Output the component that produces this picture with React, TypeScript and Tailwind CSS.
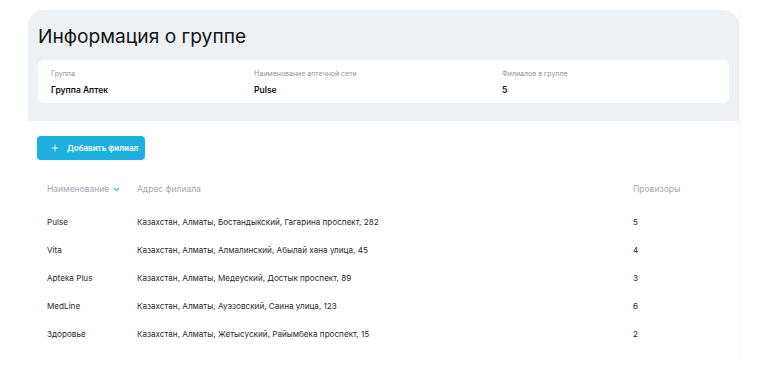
import { FC } from "react"
import { ChevronDown, Plus } from "lucide-react"

const branches = [
	{ name: "Pulse", address: "Казахстан, Алматы, Бостандыкский, Гагарина проспект, 282", count: 5 },
	{ name: "Vita", address: "Казахстан, Алматы, Алмалинский, Абылай хана улица, 45", count: 4 },
	{ name: "Apteka Plus", address: "Казахстан, Алматы, Медеуский, Достык проспект, 89", count: 3 },
	{ name: "MedLine", address: "Казахстан, Алматы, Ауэзовский, Саина улица, 123", count: 6 },
	{ name: "Здоровье", address: "Казахстан, Алматы, Жетысуский, Райымбека проспект, 15", count: 2 },
]

const App: FC = () => {
	return (
		<div className="min-h-[386px] bg-white pt-[10px] pl-[28px] font-['Inter',sans-serif]">
			<div className="w-[712px] bg-white border-r border-[#f6f7f8]">
				{/* group info */}
				<div className="bg-[#eef1f4] rounded-t-[16px] px-[10px] pt-[13px] pb-[18px]">
					<h1 className="text-[19.2px] leading-[26px] text-[#141414]">
						Информация о группе
					</h1>
					<div className="mt-[11px] bg-white rounded-[6px] h-[43px] pl-[13px] flex items-start pt-[9px]">
						<div className="w-[203px]">
							<p className="text-[7px] leading-[10px] text-[#8c919b]">Группа</p>
							<p className="mt-[5px] text-[8.5px] leading-[12px] font-semibold text-[#111]">Группа Аптек</p>
						</div>
						<div className="w-[248px]">
							<p className="text-[7px] leading-[10px] text-[#8c919b]">Наименование аптечной сети</p>
							<p className="mt-[5px] text-[8.5px] leading-[12px] font-semibold text-[#111]">Pulse</p>
						</div>
						<div>
							<p className="text-[7px] leading-[10px] text-[#8c919b]">Филиалов в группе</p>
							<p className="mt-[5px] text-[8.5px] leading-[12px] font-semibold text-[#111]">5</p>
						</div>
					</div>
				</div>

				{/* branches */}
				<div className="pt-[15px] pl-[9px] pb-[10px]">
					<button className="h-[24px] w-[108px] rounded-[4px] bg-[#1eb0e1] text-white flex items-center pl-[13px] gap-[7px]">
						<Plus className="w-[10px] h-[10px]" strokeWidth={2.2} />
						<span className="text-[8px] font-semibold">Добавить филиал</span>
					</button>

					<div className="mt-[22px] pl-[10px] flex items-center h-[14px] text-[8.5px] text-[#a3a8b4]">
						<div className="w-[90px] flex items-center gap-[3px]">
							<span>Наименование</span>
							<ChevronDown className="w-[9px] h-[9px] text-[#1eb0e1]" strokeWidth={3} />
						</div>
						<div className="w-[496px]">Адрес филиала</div>
						<div>Провизоры</div>
					</div>

					<div className="mt-[12px] pl-[10px]">
						{branches.map(b => (
							<div key={b.name} className="flex items-center h-[28px] text-[8.15px] text-[#2a2a2a]">
								<div className="w-[90px]">{b.name}</div>
								<div className="w-[496px]">{b.address}</div>
								<div>{b.count}</div>
							</div>
						))}
					</div>
				</div>
			</div>
		</div>
	)
}

export default App
